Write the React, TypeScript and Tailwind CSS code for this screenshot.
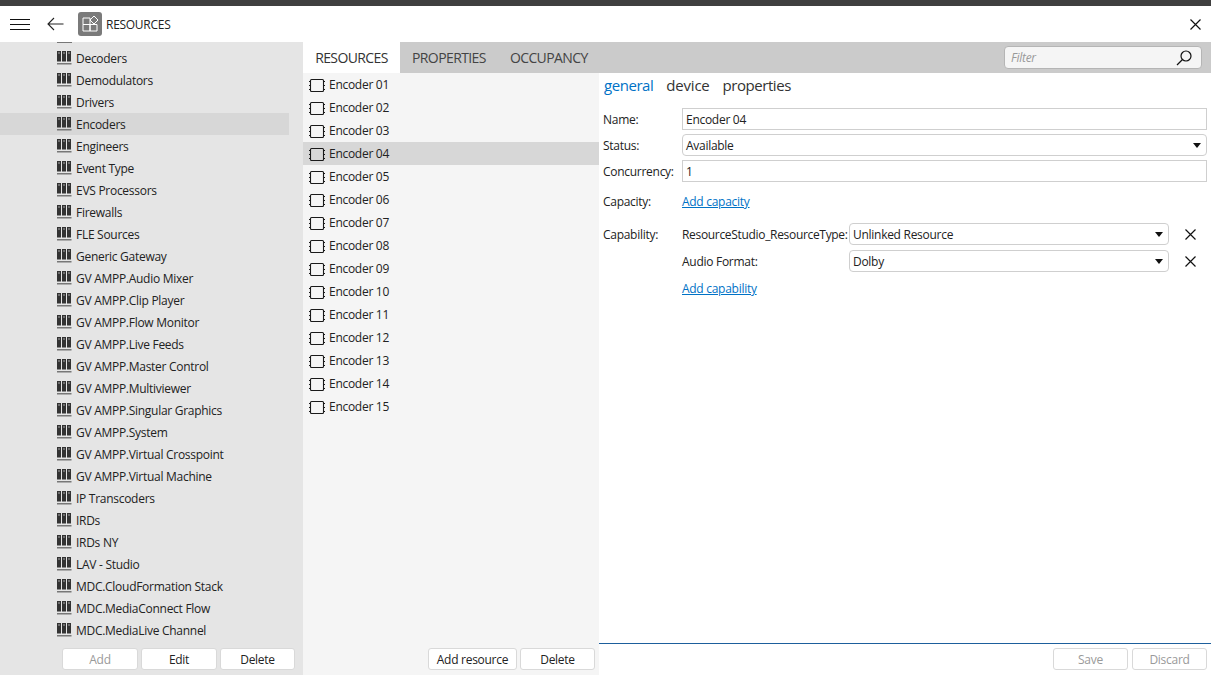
import React from 'react';

const cats = ['Decoders','Demodulators','Drivers','Encoders','Engineers','Event Type','EVS Processors','Firewalls','FLE Sources','Generic Gateway','GV AMPP.Audio Mixer','GV AMPP.Clip Player','GV AMPP.Flow Monitor','GV AMPP.Live Feeds','GV AMPP.Master Control','GV AMPP.Multiviewer','GV AMPP.Singular Graphics','GV AMPP.System','GV AMPP.Virtual Crosspoint','GV AMPP.Virtual Machine','IP Transcoders','IRDs','IRDs NY','LAV - Studio','MDC.CloudFormation Stack','MDC.MediaConnect Flow','MDC.MediaLive Channel'];
const encs = Array.from({length:15},(_,i)=>`Encoder ${String(i+1).padStart(2,'0')}`);

function Books(){return <svg width="15" height="14" viewBox="0 0 15 14" className="shrink-0"><path d="M0 0h4v10.500H0zM5 0h4v10.500H5zM10 0h4v10.500h-4z" fill="#333"/><path d="M1 2h2M6 2h2M11 2h2" stroke="#a8a8a8" strokeWidth="1"/><rect x="0" y="12" width="14.500" height="1.500" fill="#777"/></svg>}
function Chip(){return <svg width="16" height="14" viewBox="0 0 16 14" className="shrink-0 mt-[1px]"><rect x="1.500" y="1.500" width="13" height="12" rx="1" fill="none" stroke="#1a1a1a" strokeWidth="1.100"/><path d="M0 3.500h1.500M0 7.500h1.500M0 11.500h1.500M14.500 3.500h1.500M14.500 7.500h1.500M14.500 11.500h1.500" stroke="#1a1a1a" strokeWidth="1"/></svg>}
function X(){return <svg width="11" height="11" viewBox="0 0 11 11"><path d="M.5.5l10 10M10.500.5l-10 10" stroke="#111" strokeWidth="1.200"/></svg>}
function Caret(){return <svg width="8" height="5" viewBox="0 0 8 5"><path d="M0 0h8L4 5z" fill="#111"/></svg>}
function Btn({children,w,dis}:{children:React.ReactNode;w:string;dis?:boolean}){return <div className={`${w} h-[22px] pt-[2px] rounded-[3px] border border-[#d9d9d9] bg-white flex items-center justify-center ${dis?'text-[#9a9a9a]':'text-[#222]'}`}>{children}</div>}
function Sel({children}:{children:React.ReactNode}){return <div className="flex-1 h-[22px] rounded-[4px] border border-[#cfcfcf] bg-white flex items-center justify-between pl-[3px] pr-[5px]"><span className="pt-[2px]">{children}</span><Caret/></div>}
function Row({label,children,cls}:{label:string;children:React.ReactNode;cls:string}){return <div className={`flex items-center ${cls}`}><div className="w-[79px] shrink-0 pt-[2px]">{label}</div><div className="flex-1 flex items-center min-w-0">{children}</div></div>}

export default function App(){return(
<div className="w-[1211px] h-[675px] overflow-hidden bg-white flex flex-col text-[12px] text-[#222] tracking-[-0.28px]" style={{fontFamily:'"Open Sans","Noto Sans",sans-serif'}}>
  <div className="h-[6px] bg-[#3f3f3f] shrink-0"/>
  <div className="h-[36px] shrink-0 flex items-center pl-[10px] pr-[10px]">
    <svg className="mt-[1px]" width="20" height="12" viewBox="0 0 20 12"><path d="M0 .5h20M0 5.500h20M0 10.500h20" stroke="#111" strokeWidth="1"/></svg>
    <svg className="ml-[17px]" width="17" height="14" viewBox="0 0 17 14"><path d="M16.500 7H1M7 1L1 7l6 6" fill="none" stroke="#222" strokeWidth="1.100"/></svg>
    <div className="ml-[14px] w-[24px] h-[24px] rounded-[3px] bg-[#7a7a7a] flex items-center justify-center">
      <svg width="18" height="18" viewBox="0 0 18 18"><path d="M2 3h7v6.500H2zM2 9.500h7V16H2zM9 9.500h7V16H9z" fill="none" stroke="#fff" strokeWidth="1"/><path d="M13 1l4 4-4 4-4-4z" fill="#7a7a7a" stroke="#fff" strokeWidth="1"/></svg>
    </div>
    <div className="ml-[4px] flex-1 pt-[2px]">RESOURCES</div>
    <X/>
  </div>
  <div className="flex-1 flex min-h-0">
    <div className="w-[303px] shrink-0 bg-[#e5e5e5] flex flex-col pr-[14px] overflow-hidden">
      <div className="h-[5px] shrink-0 pl-[57px]"><div className="w-[15px] h-[1px] bg-[#777]"/></div>
      {cats.map(c=><div key={c} className={`h-[22px] shrink-0 flex items-center pl-[57px] gap-[4px] ${c==='Encoders'?'bg-[#d7d7d7]':''}`}><Books/><span className="pt-[2px]">{c}</span></div>)}
      <div className="mt-[7px] flex pl-[62px] gap-[3px] -mr-[6px]">
        <Btn w="w-[76px]" dis>Add</Btn><Btn w="w-[76px]">Edit</Btn><Btn w="w-[75px]">Delete</Btn>
      </div>
    </div>
    <div className="flex-1 flex flex-col min-w-0">
      <div className="h-[31px] shrink-0 bg-[#cbcbcb] flex items-center">
        <div className="w-[97px] h-full bg-white flex items-center justify-center text-[14px] text-[#333] tracking-[-0.6px]">RESOURCES</div>
        <div className="ml-[12px] text-[14px] text-[#444] tracking-[-0.6px]">PROPERTIES</div>
        <div className="ml-[24px] text-[14px] text-[#444] tracking-[-0.6px]">OCCUPANCY</div>
        <div className="ml-auto mr-[9px] w-[198px] h-[23px] rounded-[4px] border border-[#b5b5b5] bg-[#f5f5f5] flex items-center justify-between pl-[6px] pr-[9px]">
          <span className="italic text-[#999] pt-[1px]">Filter</span>
          <svg width="16" height="16" viewBox="0 0 16 16"><circle cx="10" cy="6" r="5" fill="none" stroke="#111" strokeWidth="1.200"/><path d="M6.500 9.500L1 15" stroke="#111" strokeWidth="1.300"/></svg>
        </div>
      </div>
      <div className="flex-1 flex min-h-0">
        <div className="w-[296px] shrink-0 bg-[#f5f5f5] flex flex-col">
          <div className="flex-1">
            {encs.map(e=><div key={e} className={`h-[23px] flex items-center pl-[6px] gap-[4px] ${e==='Encoder 04'?'bg-[#d7d7d7]':''}`}><Chip/><span className="pt-[1px]">{e}</span></div>)}
          </div>
          <div className="h-[31px] shrink-0 flex justify-end pt-[4px] pr-[4px] gap-[3px]">
            <Btn w="w-[89px]">Add resource</Btn><Btn w="w-[75px]">Delete</Btn>
          </div>
        </div>
        <div className="flex-1 flex flex-col min-w-0">
          <div className="flex-1 pl-[4px] pr-[4px]">
            <div className="h-[26px] pl-[1px] pb-[2px] flex items-center gap-[13px] text-[15px] text-[#333] tracking-[-0.45px]"><span className="text-[#0072c6]">general</span><span className="tracking-[-0.2px]">device</span><span>properties</span></div>
            <Row label="Name:" cls="mt-[9px] h-[22px]"><div className="flex-1 h-[22px] pt-[2px] border border-[#cfcfcf] flex items-center pl-[3px]">Encoder 04</div></Row>
            <Row label="Status:" cls="mt-[4px] h-[22px]"><Sel>Available</Sel></Row>
            <Row label="Concurrency:" cls="mt-[4px] h-[22px]"><div className="flex-1 h-[22px] pt-[2px] border border-[#cfcfcf] flex items-center pl-[3px]">1</div></Row>
            <Row label="Capacity:" cls="mt-[8px] h-[22px]"><span className="text-[#0072c6] underline pt-[2px]">Add capacity</span></Row>
            <Row label="Capability:" cls="mt-[11px] h-[22px]"><div className="w-[167px] shrink-0 pt-[2px] tracking-[-0.32px]">ResourceStudio_ResourceType:</div><Sel>Unlinked Resource</Sel><div className="w-[38px] shrink-0 flex pl-[16px]"><X/></div></Row>
            <Row label="" cls="mt-[5px] h-[22px]"><div className="w-[167px] shrink-0 pt-[2px]">Audio Format:</div><Sel>Dolby</Sel><div className="w-[38px] shrink-0 flex pl-[16px]"><X/></div></Row>
            <Row label="" cls="mt-[5px] h-[22px]"><span className="text-[#0072c6] underline pt-[2px]">Add capability</span></Row>
          </div>
          <div className="h-[32px] shrink-0 border-t border-[#1d5f9c] flex justify-end pt-[4px] pr-[4px] gap-[4px]">
            <Btn w="w-[75px]" dis>Save</Btn><Btn w="w-[75px]" dis>Discard</Btn>
          </div>
        </div>
      </div>
    </div>
  </div>
</div>
)}
